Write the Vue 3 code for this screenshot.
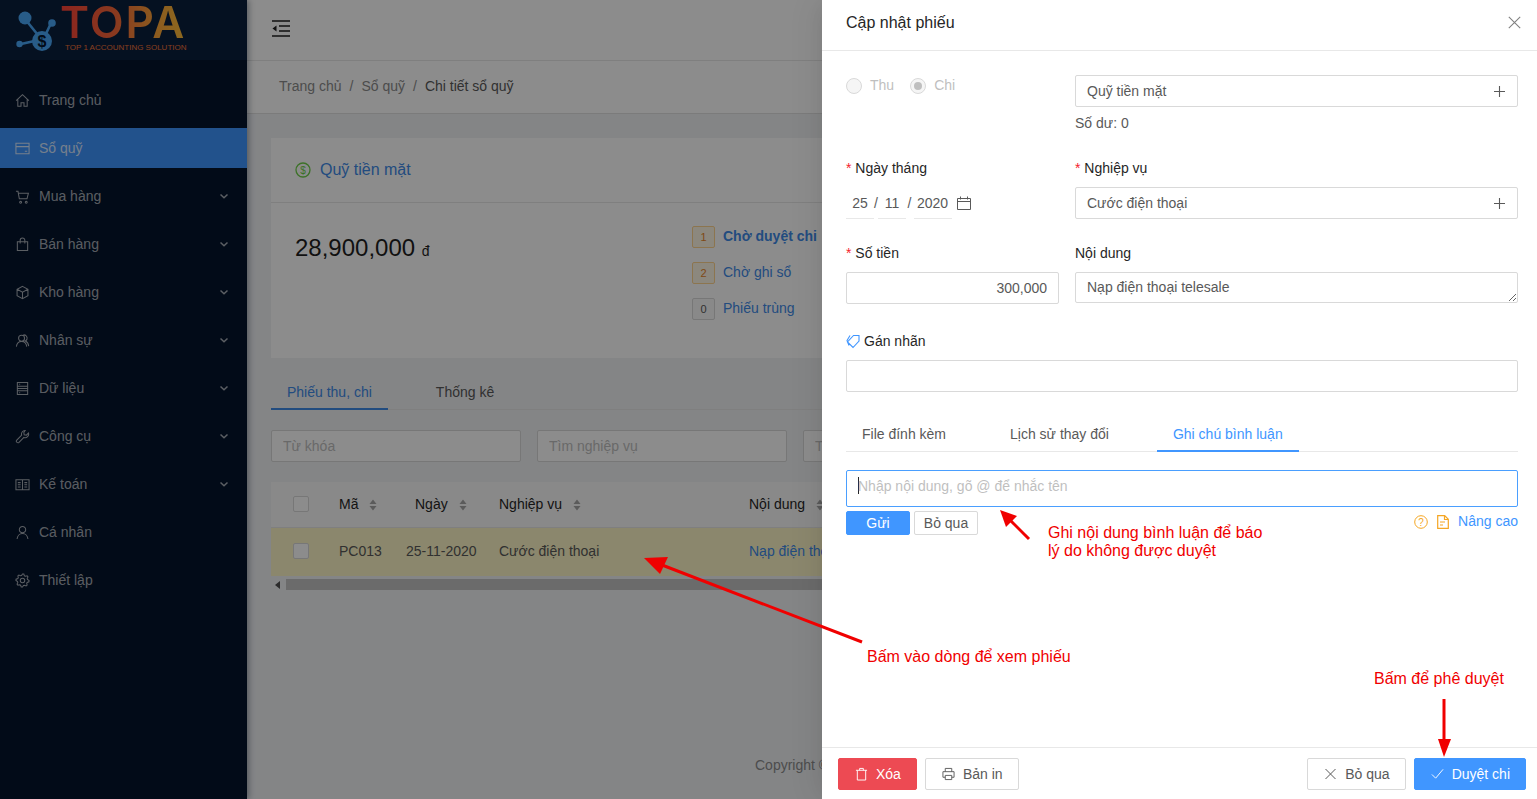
<script setup>
function gear() {
  const pts = []
  const n = 8
  for (let i = 0; i < n * 4; i++) {
    const a = (i / (n * 4)) * Math.PI * 2
    const r = i % 4 < 2 ? 7 : 5.4
    pts.push((8 + r * Math.cos(a)).toFixed(2) + ' ' + (8 + r * Math.sin(a)).toFixed(2))
  }
  return 'M' + pts.join('L') + 'Z M10.4 8a2.4 2.4 0 1 1-4.8 0a2.4 2.4 0 1 1 4.8 0'
}
const menu = [
  { label: 'Trang chủ', d: 'M1.2 8.2 8 1.8l6.8 6.4M3 7v7.2h3.4v-3.8h3.2v3.8H13V7' },
  { label: 'Sổ quỹ', active: true, d: 'M1 2.5h14v11H1zM1 6h14M10.5 11h2.5' },
  { label: 'Mua hàng', sub: true, d: 'M1 2.5h2.2l1.4 8h8.2l1.5-6H3.6M6 13.2a1 1 0 1 1-.01 0M12 13.2a1 1 0 1 1-.01 0' },
  { label: 'Bán hàng', sub: true, d: 'M2.5 5h11v9.5h-11zM5.5 7V3.6a2.5 2.5 0 0 1 5 0V7' },
  { label: 'Kho hàng', sub: true, d: 'M8 1.5l5.8 3v7L8 14.5l-5.8-3v-7zM2.2 4.5 8 7.6l5.8-3.1M8 7.6v6.9' },
  { label: 'Nhân sự', sub: true, d: 'M10.2 5.5a3.2 3.2 0 1 1-6.4 0a3.2 3.2 0 1 1 6.4 0M1.5 14.5C1.8 11.2 4 9 7 9s5.2 2.2 5.500 5.500M9 2c2.600-.2 4.400 2 3.800 4.400-.3 1-1 1.800-1.800 2.200 2 .8 3.300 2.800 3.600 5.400' },
  { label: 'Dữ liệu', sub: true, d: 'M2.5 1.5h11v13h-11zM2.5 5.5h11M2.5 8h11M2.5 10.5h11M4.5 3.5h1M4.5 12.5h1' },
  { label: 'Công cụ', sub: true, d: 'M10.8 1.6a3.8 3.8 0 0 0-3.7 5L1.9 11.8a1.7 1.7 0 0 0 2.4 2.4l5.2-5.2a3.8 3.8 0 0 0 4.9-4.7l-2.3 2.2-2.3-.4-.4-2.3z' },
  { label: 'Kế toán', sub: true, d: 'M1 3h14v10.5H1zM8 3v10.5M3 6h3M3 8.3h3M3 10.6h3M10 6h3M10 8.3h3M10 10.6h3' },
  { label: 'Cá nhân', d: 'M11.4 5a3.4 3.4 0 1 1-6.8 0a3.4 3.4 0 1 1 6.8 0M2.2 15c.3-3.5 2.8-6 5.8-6s5.5 2.5 5.8 6' },
  { label: 'Thiết lập', d: gear() }
]
const columns = [
  { label: 'Mã', cls: 'c-ma' },
  { label: 'Ngày', cls: 'c-ngay' },
  { label: 'Nghiệp vụ', cls: 'c-nv' },
  { label: 'Nội dung', cls: 'c-nd' }
]
const stats = [
  { n: 1, label: 'Chờ duyệt chi', tone: 'warn', strong: true },
  { n: 2, label: 'Chờ ghi sổ', tone: 'warn' },
  { n: 0, label: 'Phiếu trùng', tone: 'none' }
]
</script>

<template>
  <div class="page">
    <aside class="sider">
      <div class="logo">
        <svg class="logo-mark" width="46" height="46" viewBox="0 0 46 46">
          <path d="M9 11 26 32M36 13 28 30M5 36l18-4" stroke="#4aa8f8" stroke-width="2.6" fill="none" />
          <circle cx="9" cy="10" r="6.5" fill="#4aa8f8" />
          <circle cx="36" cy="15" r="3.8" fill="#4aa8f8" />
          <circle cx="3.5" cy="36" r="3.2" fill="#4aa8f8" />
          <circle cx="26" cy="33" r="10" fill="#4aa8f8" />
          <text x="26" y="39" text-anchor="middle" font-size="16" font-weight="700" font-family="Liberation Sans" fill="#04142c">$</text>
        </svg>
        <div class="logo-text">
          <div class="logo-name">TOPA</div>
          <div class="logo-sub">TOP 1 ACCOUNTING SOLUTION</div>
        </div>
      </div>
      <nav class="nav">
        <a v-for="m in menu" :key="m.label" class="nav-item" :class="{ active: m.active }">
          <svg class="nav-icon" width="15" height="15" viewBox="0 0 16 16"><path :d="m.d" /></svg>
          <span class="nav-label">{{ m.label }}</span>
          <svg v-if="m.sub" class="nav-chev" width="10" height="10" viewBox="0 0 10 10"><path d="M1.5 3.5 5 6.8l3.500-3.300" /></svg>
        </a>
      </nav>
    </aside>

    <main class="main">
      <header class="topbar">
        <svg width="18" height="17" viewBox="0 0 18 17" class="indent">
          <path d="M0 1h18M7 6h11M7 11h11M0 16h18" stroke="#1f1f1f" stroke-width="1.6" fill="none" />
          <path d="M4.5 5.5v6L0.5 8.5z" fill="#1f1f1f" />
        </svg>
      </header>
      <div class="crumbs">
        <span>Trang chủ</span><i>/</i><span>Sổ quỹ</span><i>/</i><span class="cur">Chi tiết sổ quỹ</span>
      </div>
      <section class="content">
        <div class="card">
          <div class="card-head">
            <svg width="16" height="16" viewBox="0 0 16 16">
              <circle cx="8" cy="8" r="7" fill="none" stroke="#6fcf4a" stroke-width="1.3" />
              <text x="8" y="11.5" text-anchor="middle" font-size="10" font-family="Liberation Sans" fill="#6fcf4a">$</text>
            </svg>
            <span>Quỹ tiền mặt</span>
          </div>
          <div class="card-body">
            <div class="amount">28,900,000 <small>đ</small></div>
            <ul class="stats">
              <li v-for="s in stats" :key="s.label">
                <b class="num" :class="s.tone">{{ s.n }}</b>
                <a :class="{ strong: s.strong }">{{ s.label }}</a>
              </li>
            </ul>
          </div>
        </div>

        <div class="tabs-main">
          <a class="tm active">Phiếu thu, chi</a>
          <a class="tm">Thống kê</a>
        </div>

        <div class="filters">
          <input class="filter" placeholder="Từ khóa" />
          <input class="filter" placeholder="Tìm nghiệp vụ" />
          <input class="filter" placeholder="Tìm" />
        </div>

        <div class="table">
          <div class="thead">
            <span class="cb c-cb"><i class="check"></i></span>
            <span v-for="c in columns" :key="c.label" class="th" :class="c.cls">
              {{ c.label }}
              <svg width="8" height="12" viewBox="0 0 8 12"><path d="M4 0.5 7.5 5H.5zM4 11.5.5 7h7z" fill="#a6a6a6" /></svg>
            </span>
          </div>
          <div class="trow">
            <span class="cb c-cb"><i class="check"></i></span>
            <span class="c-ma">PC013</span>
            <span class="c-ngay">25-11-2020</span>
            <span class="c-nv">Cước điện thoại</span>
            <a class="c-nd link">Nạp điện thoại telesale</a>
          </div>
          <div class="hscroll">
            <svg width="6" height="8" viewBox="0 0 6 8"><path d="M5 0v8L0 4z" fill="#505050" /></svg>
            <div class="thumb"></div>
          </div>
        </div>
      </section>
      <footer class="copy">Copyright ©</footer>
    </main>

    <div class="mask"></div>

    <aside class="drawer">
      <div class="d-head">
        <h2>Cập nhật phiếu</h2>
        <svg width="13" height="13" viewBox="0 0 13 13"><path d="M.8.8l11.4 11.4M12.2.8.8 12.2" stroke="#808080" stroke-width="1.1" fill="none" /></svg>
      </div>

      <div class="d-body">
        <div class="grid">
          <div class="radios">
            <label class="radio"><i class="dot"></i>Thu</label>
            <label class="radio"><i class="dot on"></i>Chi</label>
          </div>
          <div>
            <div class="select">
              <span>Quỹ tiền mặt</span>
              <svg class="plus" width="11" height="11" viewBox="0 0 11 11"><path d="M5.5 0v11M0 5.5h11" /></svg>
            </div>
            <div class="balance">Số dư: 0</div>
          </div>

          <div class="field">
            <label class="lbl"><em>*</em> Ngày tháng</label>
            <div class="date">
              <span class="seg s1">25</span><span class="sl">/</span>
              <span class="seg s2">11</span><span class="sl sl2">/</span>
              <span class="seg s3">2020</span>
              <svg width="14" height="14" viewBox="0 0 14 14"><path d="M.5 2.500h13v11H.5zM.5 5.500h13M3.500.5v3M10.500.5v3" stroke="#595959" fill="none" /></svg>
            </div>
          </div>
          <div class="field">
            <label class="lbl"><em>*</em> Nghiệp vụ</label>
            <div class="select">
              <span>Cước điện thoại</span>
              <svg class="plus" width="11" height="11" viewBox="0 0 11 11"><path d="M5.5 0v11M0 5.5h11" /></svg>
            </div>
          </div>

          <div class="field row3">
            <label class="lbl"><em>*</em> Số tiền</label>
            <input class="input right" value="300,000" />
          </div>
          <div class="field row3">
            <label class="lbl">Nội dung</label>
            <textarea class="input area" rows="1">Nạp điện thoại telesale</textarea>
          </div>
        </div>

        <div class="field tagfield">
          <label class="lbl tag-lbl">
            <svg width="14" height="15" viewBox="0 0 14 15"><path d="M7.500 1.500H13V7l-6 6.500L1.500 8zM4 1.500 1 6.500l2 5M10.300 4h.01" stroke="#4096ff" stroke-width="1.100" fill="none" /></svg>
            Gán nhãn
          </label>
          <input class="input" />
        </div>

        <div class="d-tabs">
          <a>File đính kèm</a>
          <a>Lịch sử thay đổi</a>
          <a class="active">Ghi chú bình luận</a>
        </div>

        <div class="comment"><i class="caret"></i><span>Nhập nội dung, gõ @ để nhắc tên</span></div>
        <div class="c-actions">
          <button class="mini primary">Gửi</button>
          <button class="mini">Bỏ qua</button>
          <span class="spacer"></span>
          <svg width="14" height="14" viewBox="0 0 14 14">
            <circle cx="7" cy="7" r="6.300" fill="none" stroke="#f5a623" />
            <text x="7" y="10.500" text-anchor="middle" font-size="10" font-family="Liberation Sans" fill="#f5a623">?</text>
          </svg>
          <svg class="ico-file" width="12" height="14" viewBox="0 0 12 14">
            <path d="M.7.7h7l3.600 3.600v9H.7zM7.500.7v3.800h3.800M3 7h5M3 10h3" stroke="#f5a623" stroke-width="1.200" fill="none" />
          </svg>
          <a class="adv">Nâng cao</a>
        </div>
      </div>

      <div class="d-foot">
        <button class="btn danger">
          <svg width="13" height="14" viewBox="0 0 14 14"><path d="M1 3h12M5 3V1h4v2M2.500 3v10.500h9V3" stroke="#fff" fill="none" /></svg>
          Xóa
        </button>
        <button class="btn">
          <svg width="13" height="14" viewBox="0 0 14 14"><path d="M3.500 4.500V1h7v3.500M3.500 10.500H1v-6h12v6h-2.500M3.500 8.500h7v4.500h-7z" stroke="#595959" fill="none" /></svg>
          Bản in
        </button>
        <span class="spacer"></span>
        <button class="btn">
          <svg width="13" height="12" viewBox="0 0 13 12"><path d="M1.500 1l10 10M11.500 1l-10 10" stroke="#595959" fill="none" /></svg>
          Bỏ qua
        </button>
        <button class="btn primary">
          <svg width="13" height="12" viewBox="0 0 14 12"><path d="M1 6.500 5 10.500 13 1" stroke="#fff" fill="none" /></svg>
          Duyệt chi
        </button>
      </div>
    </aside>

    <svg class="arrows" width="1537" height="799" viewBox="0 0 1537 799">
      <g stroke="#f00000" stroke-width="3" fill="#f00000">
        <path d="M862 642 662 565" fill="none" />
        <path d="M1029 539 1009 519" fill="none" />
        <path d="M1444 699 1444 742" fill="none" />
      </g>
      <g fill="#f00000">
        <path d="M644 558 668 557 660 574z" />
        <path d="M1000 510 1017 516 1006 527z" />
        <path d="M1444 757 1438 739 1451 739z" />
      </g>
    </svg>
    <p class="note n1">Ghi nội dung bình luận để báo<br />lý do không được duyệt</p>
    <p class="note n2">Bấm vào dòng để xem phiếu</p>
    <p class="note n3">Bấm để phê duyệt</p>
  </div>
</template>

<style>
html, body { margin: 0; padding: 0; }
</style>

<style scoped>
* { box-sizing: border-box; }
.page {
  position: relative;
  display: flex;
  width: 1537px;
  height: 799px;
  overflow: hidden;
  font-family: "Liberation Sans", Arial, sans-serif;
  font-size: 14px;
  color: #595959;
  background: #f0f2f5;
}

/* sidebar */
.sider {
  flex: 0 0 247px;
  background: #04142c;
  box-shadow: 2px 0 6px rgba(0, 21, 41, .35);
  z-index: 1;
}
.logo {
  height: 60px;
  background: #0a1f3c;
  display: flex;
  align-items: flex-start;
  padding: 8px 0 0 16px;
}
.logo-mark { flex: none; }
.logo-text { margin: -3px 0 0 -2px; }
.logo-name {
  font-family: Inter, "Liberation Sans", sans-serif;
  font-size: 44px;
  line-height: 34px;
  font-weight: 600;
  letter-spacing: 2px;
  background: linear-gradient(90deg, #ff4238 0%, #f96a3a 45%, #ffa53a 75%, #ffc03a 100%);
  -webkit-background-clip: text;
  background-clip: text;
  color: transparent;
  width: max-content;
}
.logo-sub {
  margin-top: 4px;
  margin-left: 5px;
  font-size: 8px;
  line-height: 10px;
  white-space: nowrap;
  color: #f0743a;
}
.nav { padding-top: 20px; display: flex; flex-direction: column; gap: 8px; }
.nav-item {
  height: 40px;
  display: flex;
  align-items: center;
  padding: 0 18px 0 15px;
  color: rgba(255, 255, 255, .65);
}
.nav-item.active { background: #3e95ff; color: rgba(255, 255, 255, .8); }
.nav-icon { flex: none; }
.nav-icon path { stroke: currentColor; fill: none; stroke-width: 1.100; }
.nav-label { margin-left: 9px; flex: 1; }
.nav-chev path { stroke: currentColor; fill: none; stroke-width: 1.500; }

/* main */
.main { flex: 1; min-width: 0; display: flex; flex-direction: column; background: #f0f2f5; }
.topbar {
  height: 61px;
  flex: none;
  background: #fff;
  border-bottom: 1px solid #e8e8e8;
  padding: 20px 0 0 25px;
}
.indent { display: block; }
.crumbs {
  height: 53px;
  flex: none;
  background: #fff;
  border-bottom: 1px solid #e0e0e0;
  display: flex;
  align-items: center;
  padding: 0 0 2px 32px;
  color: #8c8c8c;
}
.crumbs i { font-style: normal; margin: 0 8px; }
.crumbs .cur { color: #595959; }
.content { flex: 1; padding: 24px 24px 0; min-height: 0; }
.card { background: #fff; height: 220px; }
.card-head {
  height: 65px;
  border-bottom: 1px solid #e8e8e8;
  display: flex;
  align-items: center;
  gap: 9px;
  padding: 0 0 1px 24px;
  color: #3e8ae8;
  font-size: 16px;
}
.card-body { display: flex; padding: 24px 24px 0; }
.amount { width: 397px; font-size: 24px; color: #1f1f1f; line-height: 42px; white-space: nowrap; }
.amount small { font-size: 14px; }
.stats { list-style: none; margin: -2px 0 0; padding: 0; }
.stats li { display: flex; align-items: flex-start; height: 36px; white-space: nowrap; }
.stats a { margin-left: 8px; color: #3e8ae8; line-height: 22px; }
.stats a.strong { font-weight: 700; }
.num {
  width: 23px;
  height: 22px;
  border: 1px solid #d9d9d9;
  border-radius: 2px;
  font-weight: 400;
  font-size: 11px;
  text-align: center;
  line-height: 21px;
  margin-top: 1px;
}
.num.warn { background: #fff7e6; border-color: #ffd591; color: #e8862a; }
.num.none { background: #fafafa; color: #595959; }

.tabs-main { display: flex; margin-top: 13px; border-bottom: 1px solid #e8e8e8; height: 39px; }
.tm { padding: 13px 16px 0; line-height: 16px; height: 39px; margin-right: 32px; }
.tm.active { color: #3e8ae8; border-bottom: 2px solid #3e8ae8; }
.filters { display: flex; gap: 16px; margin-top: 20px; }
.filter {
  width: 250px;
  flex: none;
  height: 32px;
  border: 1px solid #d9d9d9;
  border-radius: 2px;
  background: #fff;
  padding: 0 11px;
  font: inherit;
}
.filter::placeholder { color: #bfbfbf; }

.table { margin-top: 20px; }
.thead, .trow {
  display: grid;
  grid-template-columns: 54px 66px 108px 250px 1fr;
  align-items: center;
  white-space: nowrap;
}
.thead { height: 46px; background: #fafafa; color: #262626; border-bottom: 1px solid #e8e8e8; padding-bottom: 2px; }
.trow { height: 48px; background: #fdf6c6; padding-bottom: 2px; }
.cb { padding-left: 22px; display: flex; }
.check { width: 16px; height: 16px; border: 1px solid #d9d9d9; border-radius: 2px; background: #fff; display: block; }
.th svg { margin-left: 7px; vertical-align: -2px; }
.c-ma { padding-left: 14px; }
.c-ngay { padding-left: 15px; }
.c-ngay.th { padding-left: 24px; }
.link { color: #3e8ae8; }
.hscroll { display: flex; align-items: center; gap: 5px; height: 11px; margin-top: 3px; padding-left: 4px; background: #f0f2f5; }
.thumb { flex: 1; height: 11px; background: #c4c4c4; }
.copy { height: 68px; flex: none; padding: 26px 0 0 508px; color: #8c8c8c; white-space: nowrap; }

/* mask + drawer */
.mask { position: absolute; inset: 0; background: rgba(0, 0, 0, .45); z-index: 2; }
.drawer {
  position: absolute;
  top: 0;
  right: 0;
  bottom: 0;
  width: 715px;
  background: #fff;
  z-index: 3;
  display: flex;
  flex-direction: column;
  box-shadow: -6px 0 16px -8px rgba(0, 0, 0, .08), -9px 0 28px 0 rgba(0, 0, 0, .05);
}
.d-head {
  height: 51px;
  flex: none;
  border-bottom: 1px solid #e8e8e8;
  display: flex;
  align-items: center;
  justify-content: space-between;
  padding: 0 16px 5px 24px;
}
.d-head h2 { margin: 0; font-size: 16px; font-weight: 400; color: #262626; }
.d-body { flex: 1; padding: 24px 19px 0 24px; min-height: 0; }
.grid { display: grid; grid-template-columns: 213px 443px; column-gap: 16px; }
.radios { display: flex; gap: 16px; height: 20px; }
.radio { display: flex; align-items: center; color: #bfbfbf; line-height: 20px; }
.dot {
  width: 16px;
  height: 16px;
  border: 1px solid #d9d9d9;
  border-radius: 50%;
  background: #f5f5f5;
  margin-right: 8px;
  margin-top: 1px;
  position: relative;
}
.dot.on::after {
  content: "";
  position: absolute;
  left: 3px;
  top: 3px;
  width: 8px;
  height: 8px;
  border-radius: 50%;
  background: #bfbfbf;
}
.select {
  height: 32px;
  border: 1px solid #d9d9d9;
  border-radius: 2px;
  display: flex;
  align-items: center;
  justify-content: space-between;
  padding: 0 12px 0 11px;
  background: #fff;
}
.plus path { stroke: #595959; fill: none; stroke-width: 1.100; }
.balance { line-height: 20px; margin-top: 6px; }
.grid > .field { margin-top: 25px; }
.grid > .field.row3 { margin-top: 24px; }
.lbl { display: block; line-height: 20px; height: 29px; color: #262626; }
.lbl em { color: #f5222d; font-style: normal; }
.date { display: flex; align-items: center; height: 32px; }
.seg { height: 32px; line-height: 32px; border-bottom: 1px solid #e8e8e8; text-align: center; color: #595959; }
.s1, .s2 { width: 28px; }
.s3 { width: 38px; margin-right: 5px; padding-right: 1px; }
.sl { width: 4px; text-align: center; line-height: 32px; height: 32px; }
.sl2 { width: 8px; padding-right: 1px; }
.input {
  display: block;
  width: 100%;
  height: 32px;
  border: 1px solid #d9d9d9;
  border-radius: 2px;
  padding: 0 11px;
  font: inherit;
  color: #595959;
  background: #fff;
}
.input.right { text-align: right; }
.input.area { height: 31px; padding: 3px 11px; line-height: 22px; resize: vertical; overflow: hidden; }
.tagfield { margin-top: 27px; }
.tag-lbl { display: flex; align-items: flex-start; gap: 4px; }
.tag-lbl svg { margin-top: 3px; }
.d-tabs { display: flex; gap: 32px; margin-top: 27px; height: 33px; border-bottom: 1px solid #e8e8e8; }
.d-tabs a { padding: 5px 16px 0; line-height: 20px; height: 33px; }
.d-tabs a.active { color: #4096ff; border-bottom: 2px solid #4096ff; }
.comment {
  margin-top: 18px;
  height: 37px;
  border: 1px solid #4a9fff;
  border-radius: 2px;
  display: flex;
  align-items: center;
  padding: 0 11px;
  color: #bfbfbf;
  padding-bottom: 6px;
}
.caret { width: 1px; height: 17px; background: #262626; flex: none; margin-right: -1px; }
.c-actions { display: flex; align-items: center; margin-top: 4px; }
.mini {
  width: 64px;
  height: 24px;
  border: 1px solid #d9d9d9;
  border-radius: 2px;
  background: #fff;
  font: inherit;
  color: #595959;
  padding: 0;
  margin-right: 4px;
}
.mini.primary { background: #4096ff; border-color: #4096ff; color: #fff; }
.spacer { flex: 1; }
.c-actions svg { margin-top: -2px; }
.ico-file { margin-left: 9px; }
.adv { margin-left: 9px; color: #4096ff; margin-top: -4px; }
.d-foot {
  height: 52px;
  flex: none;
  border-top: 1px solid #e8e8e8;
  display: flex;
  align-items: center;
  padding: 0 11px 0 16px;
  gap: 8px;
}
.btn {
  height: 32px;
  padding: 0 15px 0 16px;
  border: 1px solid #d9d9d9;
  border-radius: 2px;
  background: #fff;
  font: inherit;
  color: #595959;
  display: flex;
  align-items: center;
  gap: 8px;
}
.btn.danger { background: #ed4a53; border-color: #ed4a53; color: #fff; }
.btn.primary { background: #4096ff; border-color: #4096ff; color: #fff; }

/* annotations */
.arrows { position: absolute; left: 0; top: 0; z-index: 4; pointer-events: none; }
.note { position: absolute; margin: 0; z-index: 4; color: #f00000; font-size: 16px; line-height: 18px; white-space: nowrap; }
.n1 { left: 1048px; top: 524px; }
.n2 { left: 867px; top: 648px; }
.n3 { left: 1374px; top: 670px; }
</style>
